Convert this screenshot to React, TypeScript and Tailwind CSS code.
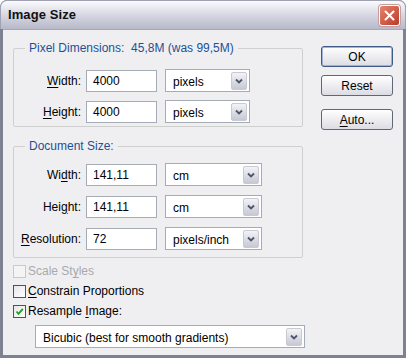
import React from 'react';

const font = "font-['Liberation_Sans',Arial,sans-serif]";

const Mn: React.FC<{ children: React.ReactNode }> = ({ children }) => (
    <span className="underline underline-offset-2 decoration-1">{children}</span>
);

const Input: React.FC<{ value: string }> = ({ value }) => (
    <div className="w-[71px] h-[22px] bg-white border border-[#a5acb5] flex items-center px-[6px] text-[12px] text-black">
        {value}
    </div>
);

const Select: React.FC<{ value: string; width: string }> = ({ value, width }) => (
    <div className={`${width} h-[23px] bg-white border border-[#a5acb5] flex items-center justify-between pl-[7px] pr-[2px] text-[12px] text-black`}>
        <span className="mt-[2px]">{value}</span>
        <Arrow />
    </div>
);

const Arrow: React.FC = () => (
    <div className="w-[16px] h-[18px] rounded-[2px] border border-[#c6cad3] bg-gradient-to-b from-[#f3f3f7] to-[#c6c8d4] flex items-center justify-center">
        <svg width="8" height="6" viewBox="0 0 8 6">
            <path d="M1 1.5 L4 4.5 L7 1.5" fill="none" stroke="#4d5566" strokeWidth="1.8" />
        </svg>
    </div>
);

const Row: React.FC<{ label: React.ReactNode; labelW: string; children: React.ReactNode }> = ({ label, labelW, children }) => (
    <div className="flex items-center">
        <div className={`${labelW} text-right text-[12px] text-black pr-[5px]`}>{label}</div>
        {children}
    </div>
);

const Button: React.FC<{ children: React.ReactNode; focused?: boolean }> = ({ children, focused }) => (
    <div
        className={`w-[72px] h-[21px] rounded-[3px] border ${focused ? 'border-[#3f5a87] shadow-[inset_0_0_0_1px_#9fb4d6]' : 'border-[#5d6878]'} bg-gradient-to-b from-white to-[#dcdce4] flex items-center justify-center text-[12px] text-black`}
    >
        {children}
    </div>
);

const Check: React.FC<{ checked?: boolean; disabled?: boolean }> = ({ checked, disabled }) => (
    <div
        className={`w-[13px] h-[13px] border ${disabled ? 'border-[#c9c9cc] bg-[#f4f4f4]' : 'border-[#4a5263] bg-gradient-to-br from-[#e6e6ea] to-white'} flex items-center justify-center`}
    >
        {checked && (
            <svg width="9" height="9" viewBox="0 0 9 9">
                <path d="M1.5 4.5 L3.5 6.8 L7.8 1.8" fill="none" stroke="#21a121" strokeWidth="1.8" />
            </svg>
        )}
    </div>
);

const App: React.FC = () => {
    return (
        <div className={`w-[406px] h-[358px] bg-[#7e8190] rounded-t-[7px] overflow-hidden flex flex-col ${font}`}>
            {/* Title bar */}
            <div className="h-[29px] shrink-0 rounded-t-[7px] bg-gradient-to-b from-[#fbfbfd] via-[#d6d7e2] to-[#b7b9c9] border-x border-t border-[#9ea2b3] flex items-center justify-between pl-[7px] pr-[5px]">
                <span className="text-[13px] font-bold text-[#111] tracking-[0.1px]">Image Size</span>
                <div className="w-[21px] h-[21px] rounded-[3px] border border-white bg-gradient-to-br from-[#e6836e] to-[#b93a28] flex items-center justify-center shadow-[0_0_0_1px_#c0a0a0]">
                    <svg width="11" height="11" viewBox="0 0 11 11">
                        <path d="M1.5 1.5 L9.5 9.5 M9.5 1.5 L1.5 9.5" stroke="white" strokeWidth="2" strokeLinecap="round" />
                    </svg>
                </div>
            </div>

            {/* Body */}
            <div className="flex-1 min-h-0 mx-[3px] mb-[3px] bg-[#efeff2] border-t border-[#a8a8b8] flex pt-[9px] pl-[10px]">
                <div className="w-[290px] flex flex-col">
                    {/* Pixel Dimensions */}
                    <fieldset className="border border-[#cfd0cd] rounded-[2px] h-[88px] pt-[12px]">
                        <legend className="ml-[11px] px-[4px] text-[12px] text-[#1f4f95]">
                            Pixel Dimensions:&nbsp;&nbsp;45,8M (was 99,5M)
                        </legend>
                        <div className="flex flex-col gap-[8px]">
                            <Row labelW="w-[72px]" label={<><Mn>W</Mn>idth:</>}>
                                <Input value="4000" />
                                <div className="w-[8px]" />
                                <Select value="pixels" width="w-[85px]" />
                            </Row>
                            <Row labelW="w-[72px]" label={<><Mn>H</Mn>eight:</>}>
                                <Input value="4000" />
                                <div className="w-[8px]" />
                                <Select value="pixels" width="w-[85px]" />
                            </Row>
                        </div>
                    </fieldset>

                    {/* Document Size */}
                    <fieldset className="mt-[10px] border border-[#cfd0cd] rounded-[2px] h-[121px] pt-[8px]">
                        <legend className="ml-[11px] px-[4px] text-[12px] text-[#1f4f95]">Document Size:</legend>
                        <div className="flex flex-col gap-[9px]">
                            <Row labelW="w-[72px]" label={<>Wi<Mn>d</Mn>th:</>}>
                                <Input value="141,11" />
                                <div className="w-[8px]" />
                                <Select value="cm" width="w-[97px]" />
                            </Row>
                            <Row labelW="w-[72px]" label={<>Hei<Mn>g</Mn>ht:</>}>
                                <Input value="141,11" />
                                <div className="w-[8px]" />
                                <Select value="cm" width="w-[97px]" />
                            </Row>
                            <Row labelW="w-[72px]" label={<><Mn>R</Mn>esolution:</>}>
                                <Input value="72" />
                                <div className="w-[8px]" />
                                <Select value="pixels/inch" width="w-[97px]" />
                            </Row>
                        </div>
                    </fieldset>

                    {/* Options */}
                    <div className="mt-[6px] flex flex-col gap-[5px] text-[12px] leading-[15px]">
                        <div className="flex items-center gap-[2px] text-[#a9a9ac]">
                            <Check disabled />
                            <span>Scale St<Mn>y</Mn>les</span>
                        </div>
                        <div className="flex items-center gap-[2px] text-black">
                            <Check />
                            <span><Mn>C</Mn>onstrain Proportions</span>
                        </div>
                        <div className="flex items-center gap-[2px] text-black">
                            <Check checked />
                            <span>Resample <Mn>I</Mn>mage:</span>
                        </div>
                    </div>
                    <div className="mt-[6px] ml-[22px]">
                        <Select value="Bicubic (best for smooth gradients)" width="w-[270px]" />
                    </div>
                </div>

                {/* Buttons */}
                <div className="ml-[18px] pt-[7px] flex flex-col">
                    <Button focused>OK</Button>
                    <div className="h-[8px]" />
                    <Button>Reset</Button>
                    <div className="h-[13px]" />
                    <Button><Mn>A</Mn>uto...</Button>
                </div>
            </div>
        </div>
    );
};

export default App;
